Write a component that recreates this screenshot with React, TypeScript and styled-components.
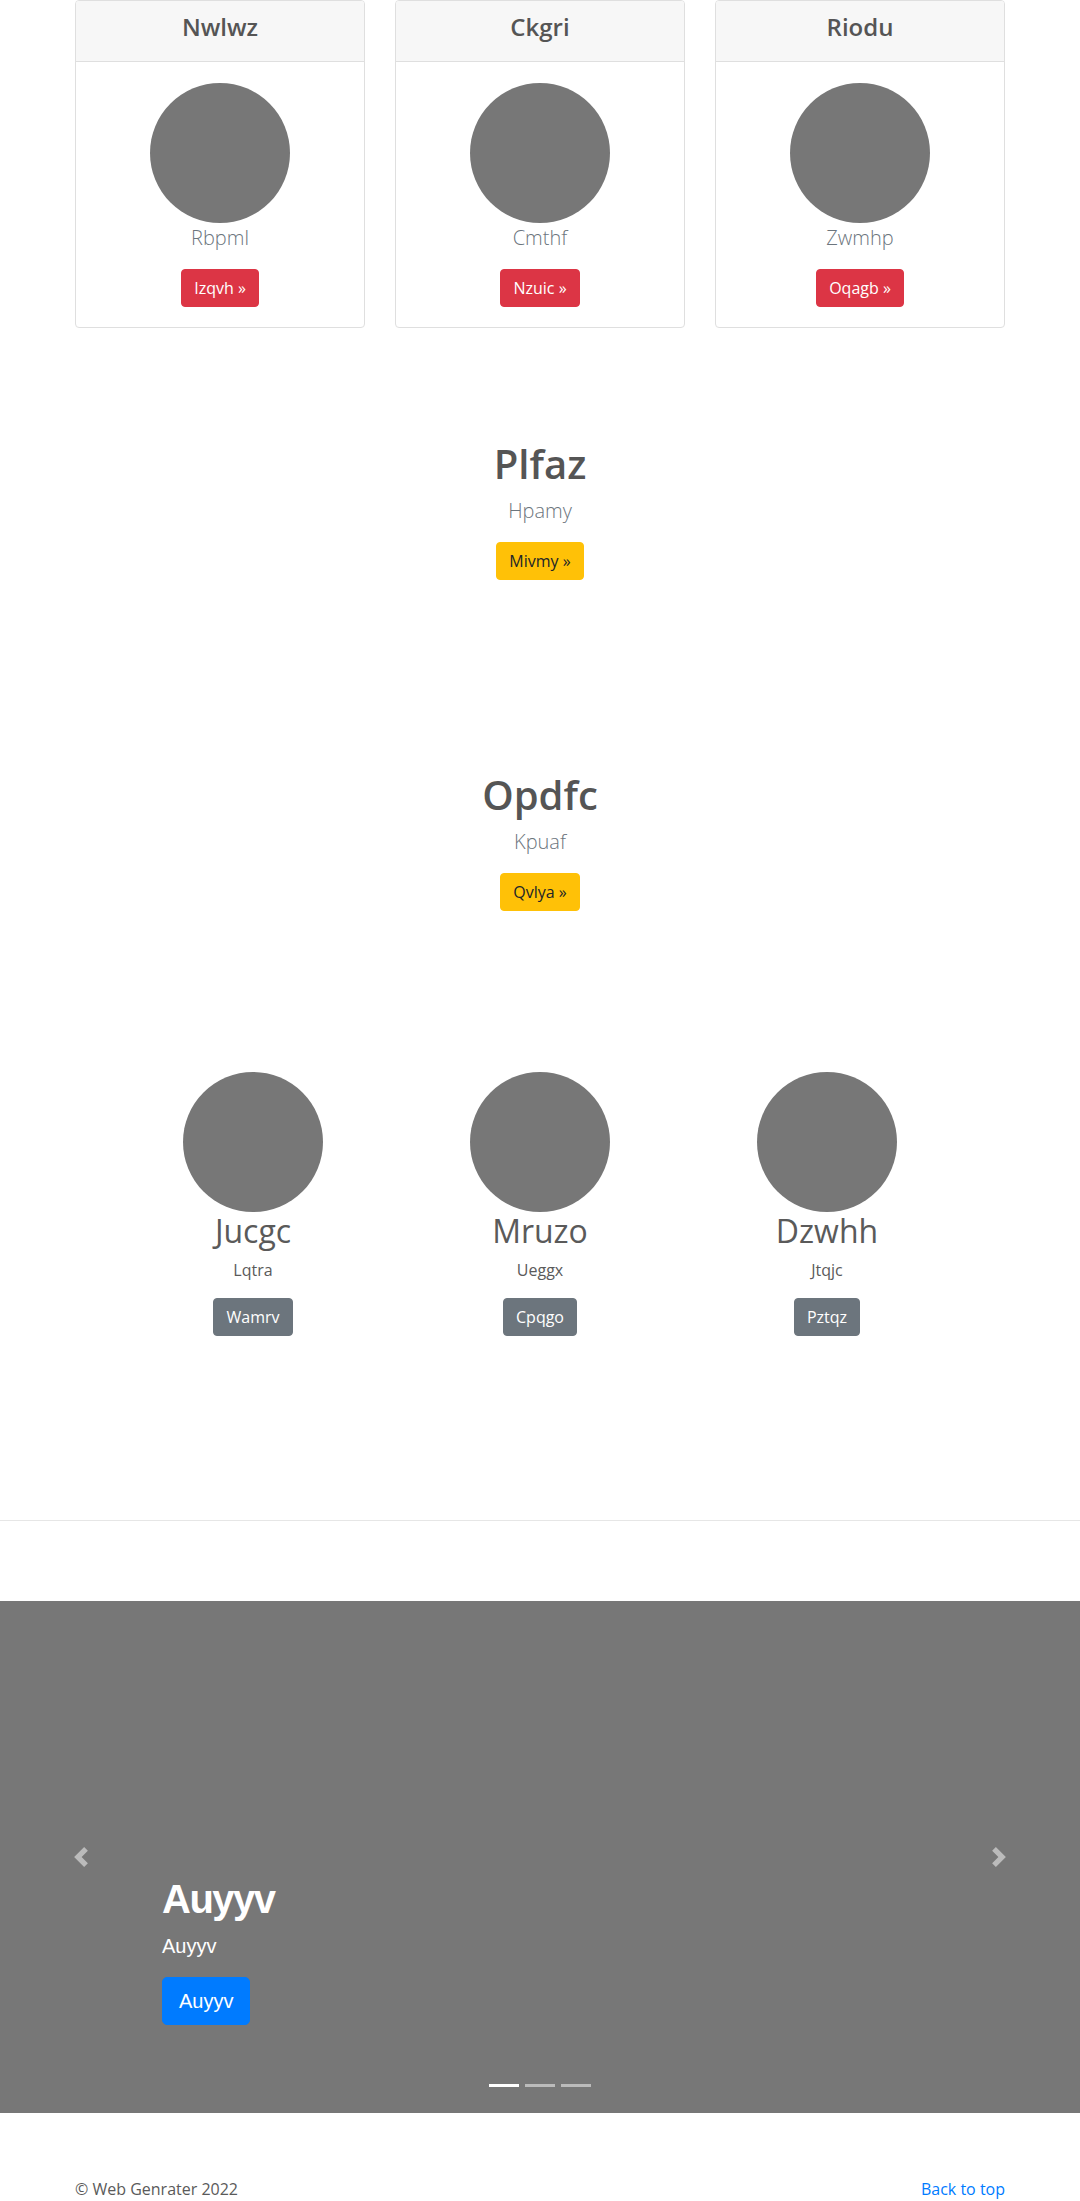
import React from "react";
import styled, { createGlobalStyle, css } from "styled-components";

const GlobalStyle = createGlobalStyle`
  html, body {
    margin: 0;
    padding: 0;
    overflow: hidden;
  }
  body {
    font-family: "Open Sans", "Noto Sans", "DejaVu Sans", sans-serif;
    font-size: 16px;
    line-height: 24px;
    color: #5a5a5a;
    background: #ffffff;
  }
  * { box-sizing: border-box; }
`;

const Page = styled.div`
  width: 1080px;
  display: flex;
  flex-direction: column;
`;

const Container = styled.div`
  width: 930px;
  margin: 0 auto;
`;

const CardRow = styled(Container)`
  display: grid;
  grid-template-columns: repeat(3, 290px);
  column-gap: 30px;
`;

const Card = styled.div`
  border: 1px solid #dfdfdf;
  border-radius: 4px;
  background: #fff;
  display: flex;
  flex-direction: column;
  overflow: hidden;
`;

const CardHeader = styled.div`
  background: #f7f7f7;
  border-bottom: 1px solid #dfdfdf;
  padding: 12px 20px;
  text-align: center;
`;

const CardTitle = styled.h4`
  margin: 0 0 8px;
  font-size: 24px;
  line-height: 28px;
  font-weight: 600;
  color: #555555;
`;

const CardBody = styled.div`
  padding: 21px 20px 20px;
  display: flex;
  flex-direction: column;
  align-items: center;
`;

const Avatar = styled.div`
  width: 140px;
  height: 140px;
  border-radius: 50%;
  background: #777777;
  flex: none;
`;

const Lead = styled.p`
  margin: 0 0 16px;
  font-size: 20px;
  line-height: 30px;
  font-weight: 300;
  color: #6c757d;
`;

type Variant = "danger" | "warning" | "secondary";

const variants: Record<Variant, ReturnType<typeof css>> = {
  danger: css`
    background: #dc3545;
    border-color: #dc3545;
    color: #fff;
  `,
  warning: css`
    background: #ffc107;
    border-color: #ffc107;
    color: #212529;
  `,
  secondary: css`
    background: #6c757d;
    border-color: #6c757d;
    color: #fff;
  `,
};

const Button = styled.a<{ $variant: Variant }>`
  display: inline-block;
  padding: 6px 12px;
  border: 1px solid transparent;
  border-radius: 4px;
  font-size: 16px;
  line-height: 24px;
  font-weight: 400;
  text-decoration: none;
  cursor: pointer;
  ${(p) => variants[p.$variant]}
`;

const Feature = styled.section<{ $top: number }>`
  margin-top: ${(p) => p.$top}px;
  display: flex;
  flex-direction: column;
  align-items: center;
  text-align: center;
`;

const FeatureTitle = styled.h1`
  margin: 0 0 8px;
  font-size: 40px;
  line-height: 48px;
  font-weight: 600;
  color: #555555;
`;

const Marketing = styled.section`
  margin-top: 161px;
  display: grid;
  grid-template-columns: repeat(3, 287px);
  justify-content: center;
`;

const MarketingCol = styled.div`
  display: flex;
  flex-direction: column;
  align-items: center;
  text-align: center;
`;

const MarketingTitle = styled.h2`
  margin: 0 0 8px;
  font-size: 32px;
  line-height: 38px;
  font-weight: 400;
  color: #5a5a5a;
`;

const MarketingText = styled.p`
  margin: 0 12px 16px;
  font-size: 16px;
  line-height: 24px;
  color: #5a5a5a;
`;

const Divider = styled.hr`
  margin: 184px 0 80px;
  border: 0;
  border-top: 1px solid #e6e6e6;
  height: 0;
  width: 100%;
`;

const Carousel = styled.section`
  position: relative;
  height: 512px;
  background: #777777;
  display: flex;
  flex-direction: column;
  justify-content: flex-end;
  padding: 0 162px 88px 162px;
  font-family: "Liberation Sans", Arial, sans-serif;
  color: #fff;
`;

const CaptionTitle = styled.h1`
  margin: 0 0 8px;
  font-family: "Liberation Sans", Arial, sans-serif;
  font-size: 40px;
  line-height: 48px;
  font-weight: 700;
  letter-spacing: -1.5px;
`;

const CaptionText = styled.p`
  margin: 0 0 16px;
  font-size: 20px;
  line-height: 30px;
`;

const CaptionButton = styled.a`
  align-self: flex-start;
  display: inline-block;
  padding: 8px 16px;
  border: 1px solid #007bff;
  border-radius: 5px;
  background: #007bff;
  color: #fff;
  font-size: 20px;
  line-height: 30px;
  text-decoration: none;
`;

const Control = styled.span<{ $side: "prev" | "next" }>`
  position: absolute;
  top: 246px;
  width: 20px;
  height: 20px;
  display: block;
  ${(p) => (p.$side === "prev" ? "left: 71px;" : "left: 989px;")}
  svg {
    display: block;
  }
`;

const Indicators = styled.ol`
  position: absolute;
  left: 0;
  right: 0;
  bottom: 26px;
  margin: 0;
  padding: 0;
  list-style: none;
  display: flex;
  justify-content: center;
  gap: 6px;
`;

const Indicator = styled.li<{ $active?: boolean }>`
  width: 30px;
  height: 3px;
  background: ${(p) => (p.$active ? "#ffffff" : "rgba(255,255,255,0.5)")};
`;

const Footer = styled(Container)`
  margin-top: 64px;
  display: flex;
  justify-content: space-between;
  font-size: 16px;
  line-height: 24px;
`;

const FooterText = styled.p`
  margin: 0;
  color: #5a5a5a;
`;

const FooterLink = styled.a`
  color: #007bff;
  text-decoration: none;
`;

const Chevron = ({ dir }: { dir: "prev" | "next" }) => (
  <svg width="20" height="20" viewBox="0 0 8 8" aria-hidden="true">
    <path
      fill="rgba(255,255,255,0.5)"
      d={
        dir === "prev"
          ? "M5.25 0l-4 4 4 4 1.5-1.5L4.25 4l2.5-2.5L5.25 0z"
          : "M2.75 0l-1.5 1.5L3.75 4l-2.5 2.5L2.75 8l4-4-4-4z"
      }
    />
  </svg>
);

const cards = [
  { title: "Nwlwz", lead: "Rbpml", btn: "Izqvh" },
  { title: "Ckgri", lead: "Cmthf", btn: "Nzuic" },
  { title: "Riodu", lead: "Zwmhp", btn: "Oqagb" },
];

const features = [
  { title: "Plfaz", lead: "Hpamy", btn: "Mivmy", top: 112 },
  { title: "Opdfc", lead: "Kpuaf", btn: "Qvlya", top: 191 },
];

const people = [
  { name: "Jucgc", text: "Lqtra", btn: "Wamrv" },
  { name: "Mruzo", text: "Ueggx", btn: "Cpqgo" },
  { name: "Dzwhh", text: "Jtqjc", btn: "Pztqz" },
];

export default function App() {
  return (
    <>
      <GlobalStyle />
      <Page>
        <CardRow>
          {cards.map((c) => (
            <Card key={c.title}>
              <CardHeader>
                <CardTitle>{c.title}</CardTitle>
              </CardHeader>
              <CardBody>
                <Avatar />
                <Lead>{c.lead}</Lead>
                <Button $variant="danger">{c.btn} »</Button>
              </CardBody>
            </Card>
          ))}
        </CardRow>

        {features.map((f) => (
          <Feature key={f.title} $top={f.top}>
            <FeatureTitle>{f.title}</FeatureTitle>
            <Lead>{f.lead}</Lead>
            <Button $variant="warning">{f.btn} »</Button>
          </Feature>
        ))}

        <Marketing>
          {people.map((p) => (
            <MarketingCol key={p.name}>
              <Avatar />
              <MarketingTitle>{p.name}</MarketingTitle>
              <MarketingText>{p.text}</MarketingText>
              <Button $variant="secondary">{p.btn}</Button>
            </MarketingCol>
          ))}
        </Marketing>

        <Divider />

        <Carousel>
          <Control $side="prev">
            <Chevron dir="prev" />
          </Control>
          <Control $side="next">
            <Chevron dir="next" />
          </Control>
          <CaptionTitle>Auyyv</CaptionTitle>
          <CaptionText>Auyyv</CaptionText>
          <CaptionButton>Auyyv</CaptionButton>
          <Indicators>
            <Indicator $active />
            <Indicator />
            <Indicator />
          </Indicators>
        </Carousel>

        <Footer>
          <FooterText>© Web Genrater 2022</FooterText>
          <FooterLink>Back to top</FooterLink>
        </Footer>
      </Page>
    </>
  );
}
